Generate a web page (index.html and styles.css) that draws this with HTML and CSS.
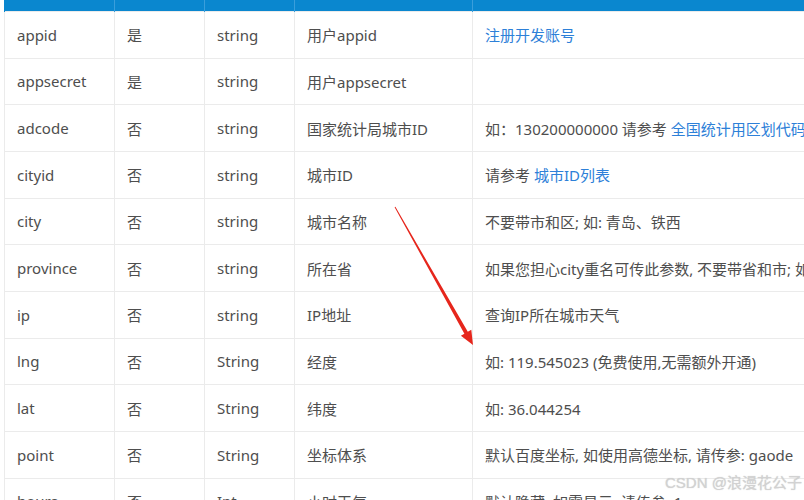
FILE: index.html
```html
<!DOCTYPE html>
<html lang="zh">
<head>
<meta charset="utf-8">
<link rel="stylesheet" href="styles.css">
</head>
<body>
<div class="page">
<table class="params">
  <colgroup>
    <col class="c1"><col class="c2"><col class="c3"><col class="c4"><col class="c5">
  </colgroup>
  <thead>
    <tr><th></th><th></th><th></th><th></th><th></th></tr>
  </thead>
  <tbody>
    <tr><td>appid</td><td>是</td><td>string</td><td>用户appid</td><td><a class="link">注册开发账号</a></td></tr>
    <tr><td>appsecret</td><td>是</td><td>string</td><td>用户appsecret</td><td></td></tr>
    <tr><td>adcode</td><td>否</td><td>string</td><td>国家统计局城市ID</td><td>如：130200000000 请参考 <a class="link">全国统计用区划代码</a></td></tr>
    <tr><td>cityid</td><td>否</td><td>string</td><td>城市ID</td><td>请参考 <a class="link">城市ID列表</a></td></tr>
    <tr><td>city</td><td>否</td><td>string</td><td>城市名称</td><td>不要带市和区; 如: 青岛、铁西</td></tr>
    <tr><td>province</td><td>否</td><td>string</td><td>所在省</td><td>如果您担心city重名可传此参数, 不要带省和市; 如: 山东</td></tr>
    <tr><td>ip</td><td>否</td><td>string</td><td>IP地址</td><td>查询IP所在城市天气</td></tr>
    <tr><td>lng</td><td>否</td><td>String</td><td>经度</td><td>如: 119.545023 (免费使用,无需额外开通)</td></tr>
    <tr><td>lat</td><td>否</td><td>String</td><td>纬度</td><td>如: 36.044254</td></tr>
    <tr><td>point</td><td>否</td><td>String</td><td>坐标体系</td><td>默认百度坐标, 如使用高德坐标, 请传参: gaode</td></tr>
    <tr><td>hours</td><td>否</td><td>Int</td><td>小时天气</td><td>默认隐藏, 如需显示, 请传参: 1</td></tr>
  </tbody>
</table>
<svg class="arrow" width="804" height="500" viewBox="0 0 804 500">
  <polygon points="394.6,207.2 395.4,206.8 467.8,331.8 471.3,329.8 473,345 460.9,335.8 464.4,333.8" fill="#e6261c"/>
</svg>
<div class="watermark">CSDN @浪漫花公子</div>
</div>
</body>
</html>
```
FILE: styles.css
```css
html, body {
  margin: 0;
  padding: 0;
  background: #fff;
  overflow: hidden;
}
.page {
  position: relative;
  width: 804px;
  height: 500px;
  overflow: hidden;
}
.params {
  margin-left: 4px;
  border-collapse: collapse;
  table-layout: fixed;
  width: 960px;
  font-family: "Noto Sans", "Noto Sans CJK SC", sans-serif;
  font-size: 15px;
  color: #4e4e4e;
}
.c1 { width: 110px; }
.c2 { width: 90px; }
.c3 { width: 90px; }
.c4 { width: 178px; }
.c5 { width: 492px; }
.params th {
  background: #0a87cf;
  height: 11px;
  padding: 0;
  border-left: 1px solid #3a9edb;
}
.params th:first-child { border-left: 1px solid #0a87cf; }
.params td {
  height: 45.67px;
  padding: 0 12px;
  border: 1px solid #ebebeb;
  white-space: nowrap;
  overflow: hidden;
  vertical-align: middle;
}
.link {
  color: #2d80d8;
  text-decoration: none;
}
.arrow {
  position: absolute;
  left: 0;
  top: 0;
}
.watermark {
  position: absolute;
  left: 665px;
  top: 474px;
  white-space: nowrap;
  font-family: "Liberation Sans", "Noto Sans CJK SC", sans-serif;
  font-size: 15px;
  line-height: 18px;
  color: #d2d2d2;
  text-shadow: 0 0 1px rgba(120,120,120,0.35);
}
```
